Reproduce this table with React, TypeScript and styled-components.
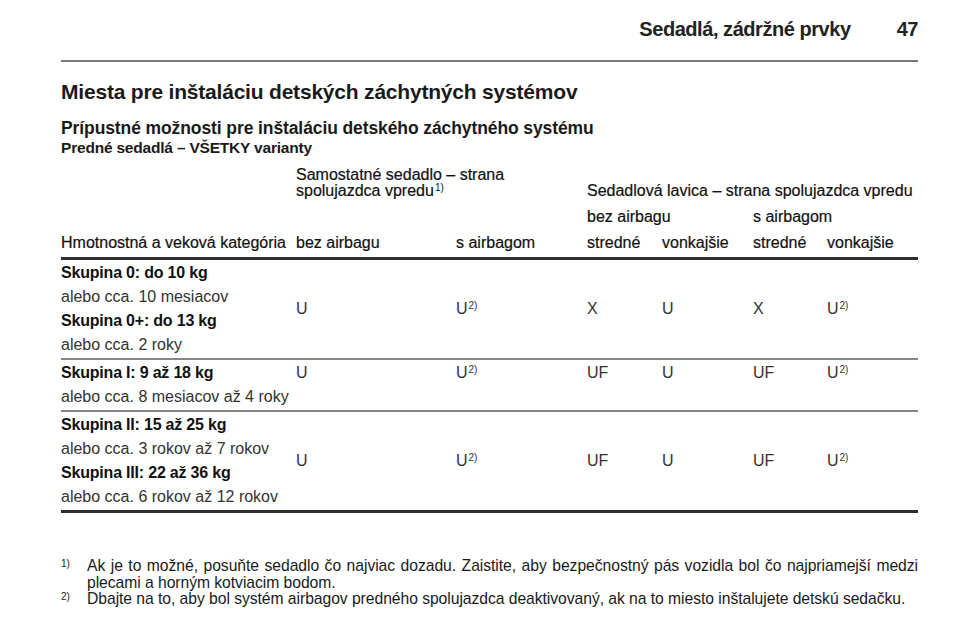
import React from "react";
import styled, { createGlobalStyle } from "styled-components";

const GlobalStyle = createGlobalStyle`
  html, body {
    margin: 0;
    padding: 0;
    background: #ffffff;
  }
  body {
    font-family: "Liberation Sans", Arial, sans-serif;
    color: #1a1a1a;
  }
`;

const Page = styled.div`
  width: 960px;
  height: 642px;
  box-sizing: border-box;
  padding: 18px 42px 0 61px;
  overflow: hidden;
`;

const RunningHead = styled.div`
  display: flex;
  justify-content: flex-end;
  align-items: baseline;
  gap: 46px;
  height: 30px;
  font-size: 20px;
  font-weight: bold;
  letter-spacing: -0.45px;
  color: #222;
  padding-bottom: 12px;
  border-bottom: 2px solid #7a7a7a;
`;

const PageTitle = styled.h1`
  margin: 16px 0 0;
  font-size: 21px;
  font-weight: bold;
  line-height: 28px;
  letter-spacing: -0.2px;
`;

const SubTitle = styled.h2`
  margin: 12px 0 0;
  font-size: 17.5px;
  font-weight: bold;
  line-height: 21px;
  letter-spacing: -0.1px;
`;

const Caption = styled.div`
  font-size: 15.5px;
  font-weight: bold;
  line-height: 17px;
  letter-spacing: -0.2px;
`;

const Table = styled.div`
  margin-top: 11px;
  width: 857px;
  display: grid;
  grid-template-columns: 235px 160px 131px 75px 91px 74px 91px;
  font-size: 16px;
`;

const HeadRow = styled.div`
  display: contents;
`;

const HeadCell = styled.div<{ $col: string; $row: string; $end?: boolean; $gap?: number }>`
  grid-column: ${(p) => p.$col};
  grid-row: ${(p) => p.$row};
  align-self: ${(p) => (p.$end ? "end" : "start")};
  margin-top: ${(p) => p.$gap ?? 0}px;
  line-height: 16px;
  color: #111;
  -webkit-text-stroke: 0.2px #111;
  white-space: nowrap;
`;

const Spacer = styled.div<{ $h: number }>`
  grid-column: 1 / -1;
  height: ${(p) => p.$h}px;
`;

const Rule = styled.div<{ $heavy?: boolean }>`
  grid-column: 1 / -1;
  height: ${(p) => (p.$heavy ? 3 : 2)}px;
  background: ${(p) => (p.$heavy ? "#2e2e2e" : "#858585")};
`;

const Category = styled.div`
  grid-column: 1;
  padding: 1px 0;
`;

const Line = styled.div<{ $bold?: boolean }>`
  line-height: 24px;
  font-weight: ${(p) => (p.$bold ? "bold" : "normal")};
  color: ${(p) => (p.$bold ? "#111" : "#333")};
  letter-spacing: ${(p) => (p.$bold ? "-0.2px" : "0")};
  white-space: nowrap;
`;

const Value = styled.div<{ $top?: boolean }>`
  align-self: ${(p) => (p.$top ? "start" : "center")};
  padding-top: ${(p) => (p.$top ? "1px" : "0")};
  line-height: 24px;
  color: #333;
`;

const Sup = styled.sup`
  font-size: 10px;
  line-height: 0;
  vertical-align: 0;
  position: relative;
  top: -5px;
  margin-left: 1px;
  -webkit-text-stroke: 0;
`;

const Notes = styled.div`
  margin-top: 45px;
  width: 857px;
  display: flex;
  flex-direction: column;
`;

const Note = styled.div`
  display: grid;
  grid-template-columns: 26px 1fr;
  font-size: 15.7px;
  line-height: 16.5px;
  color: #1a1a1a;
  letter-spacing: -0.05px;
`;

const NoteMark = styled.span`
  font-size: 10px;
  line-height: 12px;
`;

const NoteText = styled.span`
  text-align: justify;
`;

type Group = { lines: { text: string; bold?: boolean }[]; values: string[]; top?: boolean };

const groups: Group[] = [
  {
    lines: [
      { text: "Skupina 0: do 10 kg", bold: true },
      { text: "alebo cca. 10 mesiacov" },
      { text: "Skupina 0+: do 13 kg", bold: true },
      { text: "alebo cca. 2 roky" },
    ],
    values: ["U", "U*", "X", "U", "X", "U*"],
  },
  {
    lines: [
      { text: "Skupina I: 9 až 18 kg", bold: true },
      { text: "alebo cca. 8 mesiacov až 4 roky" },
    ],
    values: ["U", "U*", "UF", "U", "UF", "U*"],
    top: true,
  },
  {
    lines: [
      { text: "Skupina II: 15 až 25 kg", bold: true },
      { text: "alebo cca. 3 rokov až 7 rokov" },
      { text: "Skupina III: 22 až 36 kg", bold: true },
      { text: "alebo cca. 6 rokov až 12 rokov" },
    ],
    values: ["U", "U*", "UF", "U", "UF", "U*"],
  },
];

const columnHeads = [
  "Hmotnostná a veková kategória",
  "bez airbagu",
  "s airbagom",
  "stredné",
  "vonkajšie",
  "stredné",
  "vonkajšie",
];

const renderValue = (v: string) =>
  v.endsWith("*") ? (
    <>
      {v.slice(0, -1)}
      <Sup>2)</Sup>
    </>
  ) : (
    v
  );

export default function App() {
  return (
    <>
      <GlobalStyle />
      <Page>
        <RunningHead>
          <span>Sedadlá, zádržné prvky</span>
          <span>47</span>
        </RunningHead>
        <PageTitle>Miesta pre inštaláciu detských záchytných systémov</PageTitle>
        <SubTitle>Prípustné možnosti pre inštaláciu detského záchytného systému</SubTitle>
        <Caption>Predné sedadlá – VŠETKY varianty</Caption>

        <Table>
          <HeadRow>
            <HeadCell $col="2 / 4" $row="1" $end>
              Samostatné sedadlo – strana
              <br />
              spolujazdca vpredu<Sup>1)</Sup>
            </HeadCell>
            <HeadCell $col="4 / 8" $row="1" $end>
              Sedadlová lavica – strana spolujazdca vpredu
            </HeadCell>
          </HeadRow>
          <HeadRow>
            <HeadCell $col="4 / 6" $row="2" $gap={10}>
              bez airbagu
            </HeadCell>
            <HeadCell $col="6 / 8" $row="2" $gap={10}>
              s airbagom
            </HeadCell>
          </HeadRow>
          <HeadRow>
            {columnHeads.map((t, i) => (
              <HeadCell key={i} $col={`${i + 1}`} $row="3" $gap={10}>
                {t}
              </HeadCell>
            ))}
          </HeadRow>
          <Spacer $h={6} />
          {groups.map((g, gi) => (
            <React.Fragment key={gi}>
              <Rule $heavy={gi === 0} />
              <Category>
                {g.lines.map((l, li) => (
                  <Line key={li} $bold={l.bold}>
                    {l.text}
                  </Line>
                ))}
              </Category>
              {g.values.map((v, vi) => (
                <Value key={vi} $top={g.top}>
                  {renderValue(v)}
                </Value>
              ))}
            </React.Fragment>
          ))}
          <Rule $heavy />
        </Table>

        <Notes>
          <Note>
            <NoteMark>1)</NoteMark>
            <NoteText>
              Ak je to možné, posuňte sedadlo čo najviac dozadu. Zaistite, aby bezpečnostný pás vozidla bol čo
              najpriamejší medzi plecami a horným kotviacim bodom.
            </NoteText>
          </Note>
          <Note>
            <NoteMark>2)</NoteMark>
            <NoteText>
              Dbajte na to, aby bol systém airbagov predného spolujazdca deaktivovaný, ak na to miesto inštalujete
              detskú sedačku.
            </NoteText>
          </Note>
        </Notes>
      </Page>
    </>
  );
}
